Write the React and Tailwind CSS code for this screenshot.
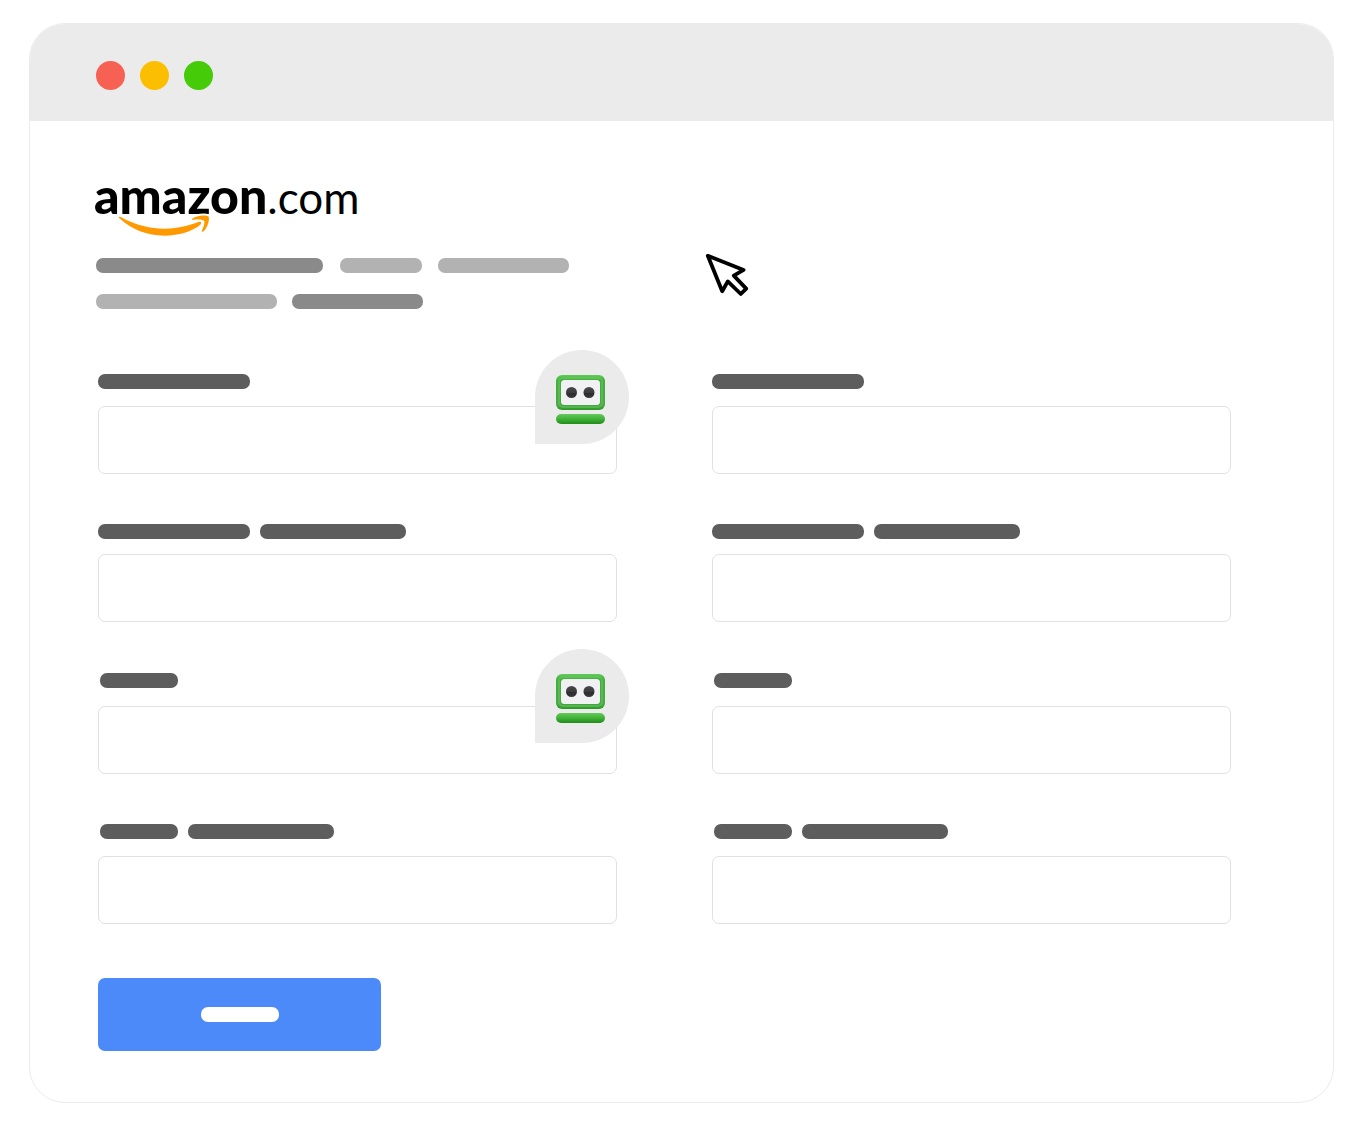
import React from "react";

const FIELDS = [
  { id: "first-name", name: "First name", bars: ["w-[152px]"], gap: "gap-[17px]", indent: "", badge: true },
  { id: "last-name", name: "Last name", bars: ["w-[152px]"], gap: "gap-[17px]", indent: "" },
  { id: "email", name: "Email address", bars: ["w-[152px]", "w-[146px]"], gap: "gap-[15px]", indent: "" },
  { id: "phone", name: "Phone number", bars: ["w-[152px]", "w-[146px]"], gap: "gap-[15px]", indent: "" },
  { id: "street", name: "Street", bars: ["w-[78px]"], gap: "gap-[18px]", indent: "pl-[2px]", badge: true },
  { id: "city", name: "City", bars: ["w-[78px]"], gap: "gap-[18px]", indent: "pl-[2px]" },
  { id: "zip", name: "Zip code", bars: ["w-[78px]", "w-[146px]"], gap: "gap-[17px]", indent: "pl-[2px]" },
  { id: "card", name: "Card number", bars: ["w-[78px]", "w-[146px]"], gap: "gap-[17px]", indent: "pl-[2px]" },
];

function Bar({ className }) {
  return <span className={`block h-[15px] rounded-[7px] ${className}`} />;
}

function Logo() {
  return (
    <svg className="block h-[56px] w-[264px] overflow-visible" viewBox="0 0 264 56" role="img" aria-label="amazon.com">
      <text x="-2" y="32" fontFamily="Lato, sans-serif" fontWeight="900" fontSize="50">
        amazon<tspan fontWeight="400" fontSize="44">.com</tspan>
      </text>
      <g transform="translate(-11 -12) scale(0.3333)" fill="#ff9900" stroke="#ffffff" strokeWidth="12" paintOrder="stroke" strokeLinejoin="round">
        <path d="M101 142C103 138 109 142 114 145C165 172 222 181 270 174C300 170 324 162 342 155C348 153 351 159 346 164C321 185 282 196 239 197C184 197 141 178 106 147C103 145 101 144 101 142Z" />
        <path d="M322 146C331 138 359 133 370 139C376 146 368 174 356 184C352 187 349 185 351 181C355 172 361 157 357 152C352 147 336 148 325 149C321 149 320 148 322 146Z" />
      </g>
    </svg>
  );
}

function RobotBadge() {
  return (
    <div className="absolute -top-[24px] -right-[12px] flex size-[94px] items-center justify-center rounded-full rounded-bl-none bg-[#ebebeb] pt-[4px] pr-[4px]">
      <svg className="size-[49px]" viewBox="0 0 49 49" aria-hidden="true">
        <defs>
          <linearGradient id="robotHead" x1="0" y1="0" x2="0" y2="1">
            <stop offset="0" stopColor="#62cc5a" />
            <stop offset="0.15" stopColor="#43b03c" />
            <stop offset="0.85" stopColor="#49a944" />
            <stop offset="1" stopColor="#2c9a26" />
          </linearGradient>
          <linearGradient id="robotBase" x1="0" y1="0" x2="0" y2="1">
            <stop offset="0" stopColor="#64c95b" />
            <stop offset="0.45" stopColor="#43b53b" />
            <stop offset="1" stopColor="#218c1b" />
          </linearGradient>
          <linearGradient id="robotEye" x1="0" y1="0" x2="0" y2="1">
            <stop offset="0" stopColor="#48484a" />
            <stop offset="0.5" stopColor="#3c3c3e" />
            <stop offset="0.6" stopColor="#2c2c2e" />
            <stop offset="1" stopColor="#3a3a3c" />
          </linearGradient>
        </defs>
        <rect width="49" height="35" rx="6" fill="url(#robotHead)" />
        <rect x="3" y="3" width="43" height="29" rx="4" fill="none" stroke="#6cc866" strokeWidth="2" opacity="0.5" />
        <rect x="5" y="5" width="39" height="25" rx="3.5" fill="#f1f1f3" />
        <circle cx="15.5" cy="17.5" r="5.5" fill="url(#robotEye)" />
        <circle cx="33" cy="17.5" r="5.5" fill="url(#robotEye)" />
        <rect y="39" width="49" height="10" rx="5" fill="url(#robotBase)" />
      </svg>
    </div>
  );
}

function Cursor() {
  return (
    <svg className="absolute top-[131px] left-[675px] h-[46px] w-[46px]" viewBox="705 252 46 46" aria-hidden="true">
      <path
        d="M707.8 255.8L743.6 269.9L733.8 275.6L746.2 288.6L740.8 294L727.8 281.4L722.2 291.2Z"
        fill="#ffffff"
        stroke="#000000"
        strokeWidth="3.8"
        strokeLinejoin="round"
      />
    </svg>
  );
}

function Field({ id, name, bars, gap, indent, badge }) {
  return (
    <div className={`relative flex min-h-[99px] flex-col ${gap}`}>
      <label htmlFor={id} aria-label={name} className={`flex gap-[10px] ${indent}`}>
        {bars.map((width, i) => (
          <Bar key={i} className={`bg-[#5d5d5d] ${width}`} />
        ))}
      </label>
      <input
        id={id}
        type="text"
        className="h-[68px] w-full rounded-[7px] border border-[#e1e1e1] bg-white px-4 text-lg outline-none"
      />
      {badge && <RobotBadge />}
    </div>
  );
}

export default function App() {
  return (
    <div className="bg-white pt-[23px] pr-[28px] pb-[31px] pl-[29px] font-['Liberation_Sans',sans-serif]">
      <div className="overflow-hidden rounded-[36px] border border-[#ebebeb] bg-white">
        <header className="flex h-[97px] items-center gap-[15px] bg-[#ebebeb] pt-[5px] pl-[66px]">
          <button type="button" aria-label="Close" className="size-[29px] rounded-full bg-[#f66154]" />
          <button type="button" aria-label="Minimize" className="size-[29px] rounded-full bg-[#fbbe01]" />
          <button type="button" aria-label="Maximize" className="size-[29px] rounded-full bg-[#45cb08]" />
        </header>
        <main className="relative pt-[61px] pr-[102px] pb-[51px] pl-[66px]">
          <Logo />
          <div className="mt-[20px] flex">
            <Bar className="w-[227px] bg-[#8a8a8a]" />
            <Bar className="ml-[17px] w-[82px] bg-[#b2b2b2]" />
            <Bar className="ml-[16px] w-[131px] bg-[#b2b2b2]" />
          </div>
          <div className="mt-[21px] flex gap-[15px]">
            <Bar className="w-[181px] bg-[#b2b2b2]" />
            <Bar className="w-[131px] bg-[#8a8a8a]" />
          </div>
          <Cursor />
          <form className="mt-[65px] pl-[2px]" onSubmit={(e) => e.preventDefault()}>
            <div className="grid grid-cols-2 gap-x-[95px] gap-y-[50px]">
              {FIELDS.map((field) => (
                <Field key={field.id} {...field} />
              ))}
            </div>
            <button
              type="submit"
              aria-label="Submit"
              className="mt-[54px] flex h-[73px] w-[283px] items-center justify-center rounded-[7px] bg-[#4d8af9]"
            >
              <Bar className="w-[78px] bg-white" />
            </button>
          </form>
        </main>
      </div>
    </div>
  );
}
